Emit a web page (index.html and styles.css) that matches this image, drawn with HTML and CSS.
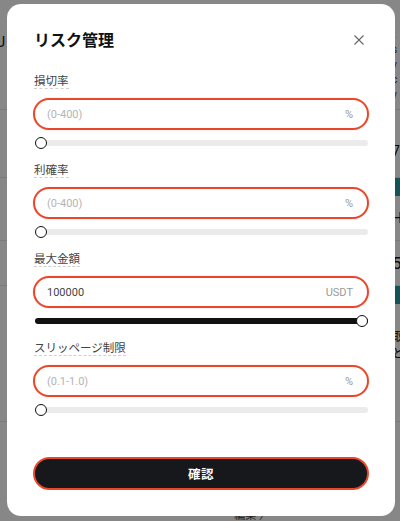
FILE: index.html
```html
<!DOCTYPE html>
<html lang="ja">
<head>
<meta charset="utf-8">
<link rel="stylesheet" href="styles.css">
</head>
<body>
<div class="page">
  <div class="prow r1"><span class="pl">U</span><span class="pr small">l<br>t<br>s<br>v<br>c<br>v</span></div>
  <div class="prow r2"><span class="pl"></span><span class="pr">7</span></div>
  <div class="prow r3"><span class="pl"></span><span class="teal"></span></div>
  <div class="prow r4"><span class="pl"></span><span class="pr">H</span></div>
  <div class="prow r5"><span class="pl"></span><span class="pr big">50</span></div>
  <div class="prow r6"><span class="pl"></span><span class="teal"></span></div>
  <div class="prow r7"><span class="pl"></span><span class="pr">取<br>と</span></div>
  <div class="prow r8"><span class="pl"></span><span class="pr mid">編集 〉</span></div>
</div>

<div class="overlay">
  <div class="modal">
    <div class="header">
      <h1 class="title">リスク管理</h1>
      <svg class="close" width="12" height="12" viewBox="0 0 12 12"><path d="M1.5 1.5L10.5 10.5M10.5 1.5L1.5 10.5" stroke="#666" stroke-width="1.1" fill="none"/></svg>
    </div>

    <div class="group">
      <div class="label">損切率</div>
      <div class="field"><input class="inp" type="text" placeholder="(0-400)"><span class="unit">%</span></div>
      <div class="track"><span class="thumb" style="--p:0"></span></div>
    </div>

    <div class="group">
      <div class="label">利確率</div>
      <div class="field"><input class="inp" type="text" placeholder="(0-400)"><span class="unit">%</span></div>
      <div class="track"><span class="thumb" style="--p:0"></span></div>
    </div>

    <div class="group">
      <div class="label">最大金額</div>
      <div class="field"><input class="inp" type="text" value="100000"><span class="unit">USDT</span></div>
      <div class="track full"><span class="thumb" style="--p:1"></span></div>
    </div>

    <div class="group last">
      <div class="label">スリッページ制限</div>
      <div class="field"><input class="inp" type="text" placeholder="(0.1-1.0)"><span class="unit">%</span></div>
      <div class="track"><span class="thumb" style="--p:0"></span></div>
    </div>

    <button class="confirm">確認</button>
  </div>
</div>
</body>
</html>
```

FILE: styles.css
```css
* { box-sizing: border-box; }
html, body { margin: 0; padding: 0; }
body {
  width: 400px;
  height: 521px;
  overflow: hidden;
  background: #fff;
  font-family: Roboto, "Noto Sans CJK JP", sans-serif;
  color: #222;
}

/* background page */
.page { display: flex; flex-direction: column; }
.prow {
  display: flex;
  justify-content: space-between;
  border-bottom: 1px solid #e6e6e6;
  font-size: 14px;
  color: #111;
}
.pl { margin-left: -4px; }
.pr { margin-right: -4px; text-align: left; width: 12px; }
.small { font-size: 10px; line-height: 15px; padding-top: 6px; color: #333; }
.big { font-size: 17px; }
.mid { font-size: 11px; width: auto; margin-right: 130px; color: #444; }
.r1 { height: 110px; align-items: flex-start; padding-top: 34px; }
.r1 .pr { margin-top: -28px; }
.r2 { height: 68px; align-items: flex-end; padding-bottom: 18px; }
.r3 { height: 18px; align-items: center; border-bottom: 0; }
.teal { width: 6px; height: 18px; background: #2b9a9e; }
.r4 { height: 45px; align-items: center; }
.r5 { height: 45px; align-items: center; }
.r6 { height: 26px; align-items: flex-start; border-bottom: 0; }
.r7 { height: 110px; align-items: flex-end; padding-bottom: 60px; font-size: 12px; }
.r8 { height: 100px; align-items: flex-end; border-bottom: 0; }

/* overlay + modal */
.overlay {
  position: fixed;
  inset: 0;
  background: rgba(0, 0, 0, 0.47);
  padding: 4px 0 0 7px;
}
.modal {
  width: 388px;
  height: 512px;
  background: #fff;
  border-radius: 14px;
  padding: 25px 26px 26px;
  display: flex;
  flex-direction: column;
}
.header {
  display: flex;
  justify-content: space-between;
  align-items: center;
  height: 24px;
  margin-bottom: 19px;
}
.title {
  margin: 0;
  font-size: 16px;
  line-height: 24px;
  font-weight: 700;
  color: #111;
  padding-left: 1px;
}
.close { margin-right: 4px; margin-top: -2px; }

.group {
  display: flex;
  flex-direction: column;
  margin-bottom: 12px;
}
.group.last { margin-bottom: 0; }
.label {
  align-self: flex-start;
  font-size: 11.5px;
  line-height: 14px;
  padding-top: 2px;
  color: #444;
  border-bottom: 1px dashed #cfcfcf;
  margin-left: 1px;
}
.field {
  margin-top: 9px;
  height: 32px;
  border: 2px solid #e9472b;
  border-radius: 16px;
  display: flex;
  align-items: center;
  padding: 0 14px 0 12px;
  box-shadow: 0 0 1px rgba(233, 71, 43, 0.6);
}
.inp {
  flex: 1;
  min-width: 0;
  border: 0;
  outline: 0;
  padding: 0;
  background: transparent;
  font-family: Roboto, "Noto Sans CJK JP", sans-serif;
  font-size: 11px;
  color: #444;
}
.inp::placeholder { color: #b4b4b4; }
.unit { font-size: 11px; color: #9a9a9a; }

.track {
  position: relative;
  margin: 10px 1px 3px 2px;
  height: 6px;
  border-radius: 3px;
  background: #ebebec;
}
.track.full { background: #111; }
.thumb {
  position: absolute;
  top: -3px;
  left: calc(var(--p) * (100% - 12px));
  width: 12px;
  height: 12px;
  border-radius: 50%;
  background: #fff;
  border: 1.5px solid #111;
}

.confirm {
  margin-top: 41px;
  height: 33px;
  border: 2px solid #e9472b;
  border-radius: 17px;
  background: #17181b;
  color: #fff;
  font-family: Roboto, "Noto Sans CJK JP", sans-serif;
  font-size: 12.5px;
  font-weight: 700;
  letter-spacing: 0.5px;
}
```
